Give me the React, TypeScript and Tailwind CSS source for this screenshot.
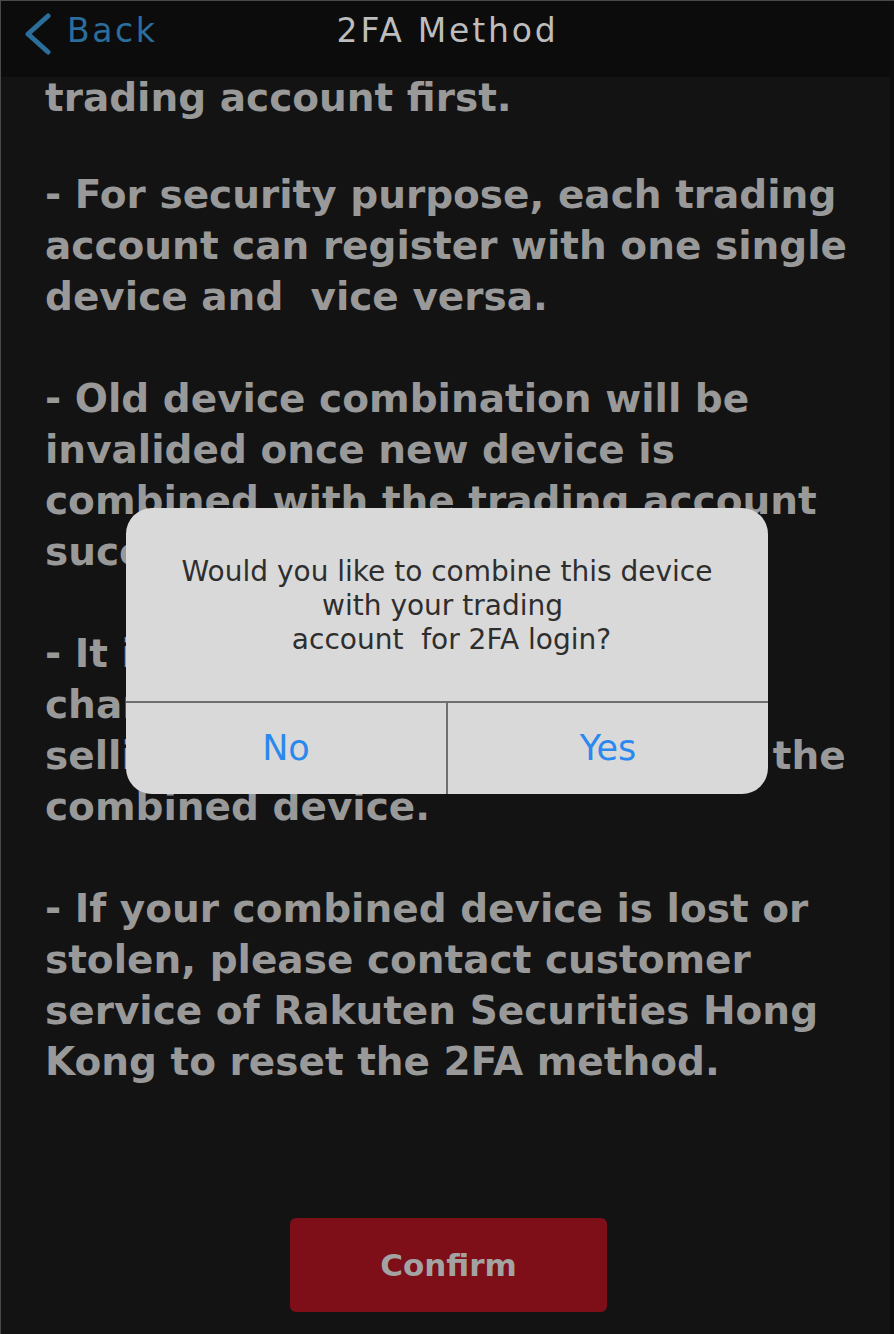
import React from "react";

const sans = { fontFamily: '"DejaVu Sans", "Liberation Sans", sans-serif' };

function Line({ children }: { children: React.ReactNode }) {
  return <div className="whitespace-pre">{children}</div>;
}

export default function App() {
  return (
    <div
      className="relative w-[894px] h-[1334px] overflow-hidden bg-[#131313] flex flex-col border-l border-t border-[#4a4a4a]"
      style={sans}
    >
      {/* Header */}
      <div className="relative h-[76px] shrink-0 bg-[#0c0c0c] flex items-start pt-[13px]">
        <div className="flex items-start pl-[21px]">
          <svg width="30" height="42" viewBox="0 0 30 42" className="mt-[-1px]">
            <path d="M26 3 L6 21 L26 39" fill="none" stroke="#2b6d9b" strokeWidth="5" strokeLinecap="round" strokeLinejoin="round" />
          </svg>
          <span className="ml-[15px] text-[33px] leading-[34px] tracking-[2.6px] text-[#2b6d9b]">Back</span>
        </div>
        <div className="absolute left-0 right-0 top-[13px] text-center text-[33px] leading-[34px] tracking-[2.8px] text-[#bdbdbd]">
          2FA Method
        </div>
      </div>

      {/* Content */}
      <div className="flex-1 overflow-hidden pl-[44px]">
        <div className="mt-[-5px] text-[39px] leading-[51px] font-bold text-[#999999]">
          <div className="mb-[46px]">
            <Line>trading account first.</Line>
          </div>
          <div className="mb-[51px]">
            <Line>- For security purpose, each trading</Line>
            <Line>account can register with one single</Line>
            <Line>device and  vice versa.</Line>
          </div>
          <div className="mb-[51px]">
            <Line>- Old device combination will be</Line>
            <Line>invalided once new device is</Line>
            <Line>combined with the trading account</Line>
            <Line>successfully.</Line>
          </div>
          <div className="mb-[51px]">
            <Line>- It is suggested to reset 2FA</Line>
            <Line>changing your phone</Line>
            <Line>selling your device, please reset the</Line>
            <Line>combined device.</Line>
          </div>
          <div>
            <Line>- If your combined device is lost or</Line>
            <Line>stolen, please contact customer</Line>
            <Line>service of Rakuten Securities Hong</Line>
            <Line>Kong to reset the 2FA method.</Line>
          </div>
        </div>
      </div>

      {/* Confirm button */}
      <div className="shrink-0 flex justify-center pb-[22px] pl-[2px]">
        <button className="w-[317px] h-[94px] rounded-[6px] bg-[#7e0e17] text-[31px] font-bold text-[#a3a3a3]">
          Confirm
        </button>
      </div>

      {/* Right edge strip */}
      <div className="absolute right-0 top-0 bottom-0 w-[4px] bg-[#0d0d0d]" />

      {/* Alert dialog */}
      <div className="absolute left-[125px] top-[507px] w-[642px] h-[286px] rounded-[26px] bg-[#d9d9d9] flex flex-col overflow-hidden">
        <div className="h-[193px] flex flex-col items-center pt-[47px] text-[28px] leading-[34px] text-[#2e2e2e]">
          <Line>Would you like to combine this device</Line>
          <Line>with your trading </Line>
          <Line> account  for 2FA login?</Line>
        </div>
        <div className="flex-1 flex border-t-2 border-[#6f6f6f]">
          <div className="flex-1 flex items-center justify-center text-[35px] text-[#2a88ee] border-r-2 border-[#6f6f6f]">
            No
          </div>
          <div className="flex-1 flex items-center justify-center text-[35px] text-[#2a88ee]">
            Yes
          </div>
        </div>
      </div>
    </div>
  );
}
